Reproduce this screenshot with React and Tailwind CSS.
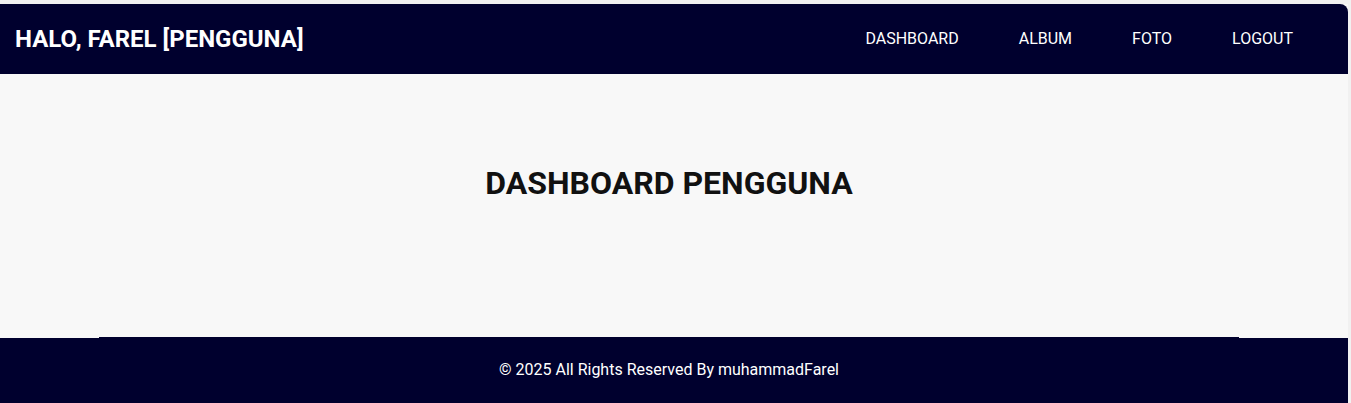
export default function App() {
  const links = ['DASHBOARD', 'ALBUM', 'FOTO', 'LOGOUT'];

  return (
    <div className="w-[1351px] h-[403px] overflow-hidden bg-[#f1f1f1] pt-[4px] font-['Roboto',sans-serif]">
      <div className="w-[1348px] h-[399px] flex flex-col bg-[#f8f8f8]">
        {/* Navbar */}
        <nav className="h-[70px] flex items-center justify-between bg-[#00002e] rounded-tr-lg pl-[15px] pr-[55px]">
          <h1 className="text-[24px] font-bold text-white">HALO, FAREL [PENGGUNA]</h1>
          <ul className="flex items-center gap-[60px]">
            {links.map((l) => (
              <li key={l}>
                <a href="#" className="text-[16px] text-white">{l}</a>
              </li>
            ))}
          </ul>
        </nav>

        {/* Content */}
        <main className="h-[263px] pt-[85px] pr-[10px] text-center">
          <h2 className="text-[32px] leading-[48px] font-bold text-[#111111]">DASHBOARD PENGGUNA</h2>
        </main>

        {/* Footer */}
        <div className="flex h-px">
          <div className="w-[99px] bg-[#f8f8f8]"></div>
          <div className="flex-1 bg-[#00002e]"></div>
          <div className="w-[109px] bg-[#f8f8f8]"></div>
        </div>
        <footer className="flex-1 flex items-center justify-center bg-[#00002e] pr-[10px] pb-[2px]">
          <p className="text-[16px] text-white">© 2025 All Rights Reserved By muhammadFarel</p>
        </footer>
      </div>
    </div>
  );
}
